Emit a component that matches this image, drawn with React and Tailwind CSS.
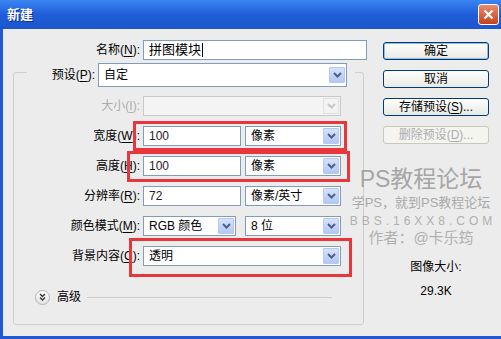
import React from "react";

const FONT = "font-['Liberation_Sans','Noto_Sans_CJK_SC',sans-serif]";

// small xp-style dropdown arrow box
const Arrow = ({ disabled }) => (
  <div
    className={
      disabled
        ? "flex h-[16px] w-[16px] items-center justify-center border border-[#e0e0e0] bg-[#f3f3f3]"
        : "flex h-[16px] w-[16px] items-center justify-center rounded-[1px] border border-[#b5c8f4] bg-linear-to-b from-[#d6e2fd] to-[#b3c7f5]"
    }
  >
    <svg width="9" height="6" viewBox="0 0 9 6">
      <path d="M1 1l3.5 3.5L8 1" stroke={disabled ? "#c6c6c6" : "#4d6185"} strokeWidth="2" fill="none" />
    </svg>
  </div>
);

const Select = ({ className, value, disabled }) => (
  <div
    className={`flex items-center justify-between pl-[5px] pr-[1px] text-[12px] ${
      disabled ? "border border-[#c9c9c9] bg-[#f4f4f4]" : "border border-[#7f9db9] bg-white text-black"
    } ${className}`}
  >
    <span>{value}</span>
    <Arrow disabled={disabled} />
  </div>
);

const Input = ({ className, value }) => (
  <div className={`flex items-center border border-[#7f9db9] bg-white pl-[5px] text-[12px] text-[#2a1530] ${className}`}>
    {value}
  </div>
);

const Label = ({ children, disabled }) => (
  <span className={`w-[126px] text-right text-[12px] ${disabled ? "text-[#acacac]" : "text-black"}`}>{children}</span>
);

const Key = ({ k }) => <span className="underline underline-offset-2">{k}</span>;

const Button = ({ children, primary, disabled }) => (
  <div
    className={
      disabled
        ? "flex h-[18px] items-center justify-center rounded-[3px] border border-[#cac8bb] bg-[#f4f4f0] text-[12px] text-[#acacac]"
        : primary
        ? "flex h-[18px] items-center justify-center rounded-[3px] border border-[#003c74] bg-linear-to-b from-white to-[#e8e8e4] text-[12px] text-black shadow-[inset_0_0_0_1px_#98b8ea]"
        : "flex h-[18px] items-center justify-center rounded-[3px] border border-[#003c74] bg-linear-to-b from-white to-[#e8e8e4] text-[12px] text-black"
    }
  >
    {children}
  </div>
);

export default function App() {
  return (
    <div className={`relative h-[339px] w-[501px] overflow-hidden bg-[#ececec] ${FONT}`}>
      {/* title bar */}
      <div className="flex h-[29px] items-center justify-between bg-linear-to-b from-[#3a85f2] via-[#1f5ed8] to-[#1b56cc] pl-[7px] pr-[2px]">
        <span className="text-[13px] font-bold text-white [text-shadow:1px_1px_0_#0b2f8a]">新建</span>
        <div className="flex h-[21px] w-[21px] items-center justify-center rounded-[3px] border border-white bg-linear-to-b from-[#e88a6c] to-[#c5401c]">
          <svg width="11" height="11" viewBox="0 0 11 11">
            <path d="M1.5 1.5l8 8M9.5 1.5l-8 8" stroke="white" strokeWidth="2.2" />
          </svg>
        </div>
      </div>

      {/* body */}
      <div className="flex h-[310px] border-b-[3px] border-l-[3px] border-[#1f59d4]">
        <div className="w-[380px] pt-[11px]">
          <div className="flex items-center gap-[3px]">
            <span className="w-[137px] text-right text-[12px]">
              名称(<Key k="N" />):
            </span>
            <div className="flex h-[20px] w-[224px] items-center border border-[#7f9db9] bg-white pl-[5px] text-[13px]">
              拼图模块<span className="ml-[1px] h-[14px] w-px bg-black" />
            </div>
          </div>

          <fieldset className="m-0 ml-[10px] mt-[3px] w-[351px] min-w-0 rounded-[3px] border border-[#d0d0c8] p-0 pb-[18px]">
            <legend className="ml-[13px] flex h-[18px] items-start gap-[3px] pr-[8px]">
              <span className="flex h-[24px] w-[68px] items-center justify-end text-[12px]">
                预设(<Key k="P" />):
              </span>
              <Select className="h-[24px] w-[249px]" value="自定" />
            </legend>

            <div className="flex flex-col gap-[10px] pt-[15px]">
              <div className="flex items-center gap-[3px]">
                <Label disabled>
                  大小(<Key k="I" />):
                </Label>
                <Select className="h-[20px] w-[198px]" value="" disabled />
              </div>
              <div className="flex items-center gap-[3px]">
                <Label>
                  宽度(<Key k="W" />):
                </Label>
                <Input className="h-[20px] w-[98px]" value="100" />
                <Select className="ml-[1px] h-[20px] w-[96px]" value="像素" />
              </div>
              <div className="flex items-center gap-[3px]">
                <Label>
                  高度(<Key k="H" />):
                </Label>
                <Input className="h-[20px] w-[98px]" value="100" />
                <Select className="ml-[1px] h-[20px] w-[96px]" value="像素" />
              </div>
              <div className="flex items-center gap-[3px]">
                <Label>
                  分辨率(<Key k="R" />):
                </Label>
                <Input className="h-[20px] w-[98px]" value="72" />
                <Select className="ml-[1px] h-[20px] w-[96px]" value="像素/英寸" />
              </div>
              <div className="flex items-center gap-[3px]">
                <Label>
                  颜色模式(<Key k="M" />):
                </Label>
                <Select className="h-[20px] w-[93px]" value="RGB 颜色" />
                <Select className="ml-[6px] h-[20px] w-[96px]" value="8 位" />
              </div>
              <div className="flex items-center gap-[3px]">
                <Label>
                  背景内容(<Key k="C" />):
                </Label>
                <Select className="h-[20px] w-[198px]" value="透明" />
              </div>
            </div>

            <div className="mt-[22px] flex items-center pl-[21px] pr-[31px]">
              <div className="flex h-[15px] w-[15px] items-center justify-center rounded-full border border-[#b4b4b4] bg-linear-to-b from-white to-[#e2e2e2]">
                <svg width="7" height="8" viewBox="0 0 7 8">
                  <path d="M1 1l2.5 2.5L6 1M1 4.5L3.5 7 6 4.5" stroke="#333" strokeWidth="1.3" fill="none" />
                </svg>
              </div>
              <span className="ml-[7px] text-[12px]">高级</span>
              <div className="ml-[6px] h-px flex-1 bg-[#cfcfc8]" />
            </div>
          </fieldset>
        </div>

        <div className="flex w-[106px] flex-col pt-[13px]">
          <div className="flex flex-col gap-[10px]">
            <Button primary>确定</Button>
            <Button>取消</Button>
            <Button>
              存储预设(<Key k="S" />)...
            </Button>
            <Button disabled>
              删除预设(<Key k="D" />)...
            </Button>
          </div>
          <div className="mt-[115px] flex flex-col items-center gap-[8px] text-[12px] leading-[16px] text-black">
            <span>图像大小:</span>
            <span>29.3K</span>
          </div>
        </div>
      </div>

      {/* watermark */}
      <div className="pointer-events-none absolute left-[350px] top-[168px] flex w-[142px] flex-col items-center text-[#a6a6a6]">
        <span className="text-[23px] leading-none">PS教程论坛</span>
        <span className="mt-[5px] text-[13px] leading-none text-[#a9a9a9]">学PS，就到PS教程论坛</span>
        <span className="mt-[6px] pl-[4px] text-[12px] leading-none tracking-[4px] text-[#b0b0b0]">BBS.16XX8.COM</span>
        <span className="mt-[3px] text-[15px] leading-none text-[#b0b0b0]">作者：@卡乐筠</span>
      </div>

      {/* red annotation boxes */}
      <div className="pointer-events-none absolute left-[133px] top-[121px] h-[30px] w-[214px] border-[3px] border-[#e8363c]" />
      <div className="pointer-events-none absolute left-[127px] top-[151px] h-[31px] w-[223px] border-[3px] border-[#e8363c]" />
      <div className="pointer-events-none absolute left-[129px] top-[238px] h-[39px] w-[223px] border-[3px] border-[#e8363c]" />
    </div>
  );
}
